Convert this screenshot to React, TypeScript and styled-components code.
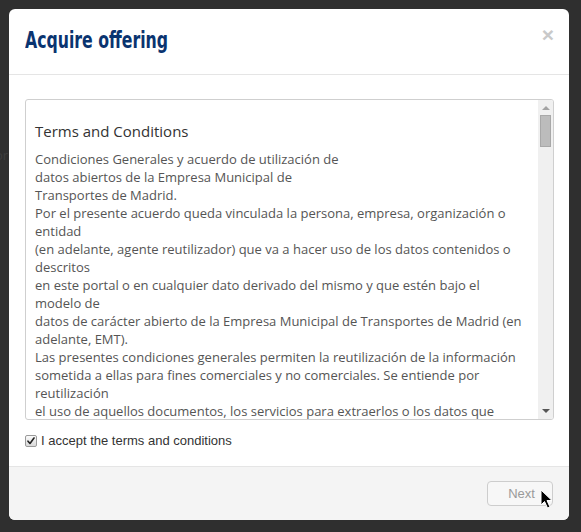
import React from "react";
import styled, { createGlobalStyle } from "styled-components";

const Global = createGlobalStyle`
  html, body { margin: 0; padding: 0; background: #2f2f2f; }
  body { width: 581px; height: 532px; overflow: hidden; font-family: "Liberation Sans", Arial, sans-serif; }
  #root { position: relative; }
`;

const Page = styled.div`
  position: relative;
  height: 532px;
  padding: 9px 0 0 9px;
  box-sizing: border-box;
`;

const BehindText = styled.span`
  position: absolute;
  left: -5px;
  top: 146px;
  font-family: "Open Sans", sans-serif;
  font-size: 13px;
  color: #3e3e3e;
`;

const Modal = styled.div`
  width: 560px;
  height: 511px;
  background: #fff;
  border-radius: 6px;
  display: flex;
  flex-direction: column;
  overflow: hidden;
`;

const Header = styled.div`
  height: 66px;
  box-sizing: border-box;
  border-bottom: 1px solid #e5e5e5;
  display: flex;
  justify-content: space-between;
  align-items: flex-start;
  padding: 0 15px 0 16px;
`;

const Title = styled.h3`
  margin: 0;
  padding-top: 17px;
  font-family: "DejaVu Sans Condensed", "DejaVu Sans", sans-serif;
  font-weight: 700;
  font-size: 23px;
  line-height: 28px;
  color: #0a3470;
  transform: scaleX(0.76);
  transform-origin: left center;
  white-space: nowrap;
`;

const Close = styled.span`
  margin-top: 15px;
  font-family: "Liberation Sans", Arial, sans-serif;
  font-weight: 700;
  font-size: 21px;
  line-height: 21px;
  color: #c9c9c9;
`;

const Body = styled.div`
  flex: 1;
  padding: 24px 15px 0 16px;
  display: flex;
  flex-direction: column;
`;

const TermsBox = styled.div`
  height: 321px;
  box-sizing: border-box;
  border: 1px solid #cfcfcf;
  border-radius: 3px;
  display: flex;
  overflow: hidden;
`;

const TermsContent = styled.div`
  flex: 1;
  overflow: hidden;
  padding: 21px 9px 0 9px;
  font-family: "Open Sans", sans-serif;
`;

const TermsHeading = styled.h4`
  margin: 0 0 9px 0;
  font-size: 15px;
  line-height: 20px;
  font-weight: 400;
  color: #333;
`;

const TermsText = styled.div`
  font-size: 13px;
  line-height: 18px;
  color: #555;
  white-space: pre-line;
`;

const ScrollTrack = styled.div`
  width: 15px;
  background: #f0f0f0;
  display: flex;
  flex-direction: column;
  align-items: center;
`;

const Arrow = styled.div<{ $down?: boolean }>`
  width: 0;
  height: 0;
  border-left: 4px solid transparent;
  border-right: 4px solid transparent;
  ${(p) => (p.$down ? "border-top: 4px solid #555;" : "border-bottom: 4px solid #a3a3a3;")}
  margin: ${(p) => (p.$down ? "auto 0 6px 0" : "6px 0 0 0")};
`;

const Thumb = styled.div`
  margin-top: 5px;
  width: 9px;
  height: 30px;
  background: #bcbcbc;
  border: 1px solid #a8a8a8;
`;

const AcceptRow = styled.label`
  display: flex;
  align-items: center;
  gap: 4px;
  margin-top: 13px;
  font-family: "Liberation Sans", Arial, sans-serif;
  font-size: 13px;
  line-height: 15px;
  color: #333;
`;

const CheckBox = styled.span`
  width: 10px;
  height: 10px;
  flex: none;
  border: 1px solid #9a9a9a;
  border-radius: 2px;
  background: linear-gradient(#fbfbfb, #d8d8d8);
  display: flex;
  align-items: center;
  justify-content: center;
`;

const Footer = styled.div`
  height: 54px;
  box-sizing: border-box;
  border-top: 1px solid #e5e5e5;
  background: #f4f4f4;
  display: flex;
  justify-content: flex-end;
  align-items: flex-start;
  padding: 14px 16px 0 0;
`;

const ButtonWrap = styled.div`
  position: relative;
`;

const NextButton = styled.button`
  width: 66px;
  height: 25px;
  box-sizing: border-box;
  border: 1px solid #cdcdcd;
  border-radius: 4px;
  background: #f7f7f7;
  font-family: "Liberation Sans", Arial, sans-serif;
  font-size: 13px;
  color: #9a9a9a;
  padding: 0 0 0 3px;
  text-align: center;
`;

const Cursor = styled.svg`
  position: absolute;
  left: 53px;
  top: 8px;
`;

const text = `Condiciones Generales y acuerdo de utilización de
datos abiertos de la Empresa Municipal de
Transportes de Madrid.
Por el presente acuerdo queda vinculada la persona, empresa, organización o entidad
(en adelante, agente reutilizador) que va a hacer uso de los datos contenidos o descritos
en este portal o en cualquier dato derivado del mismo y que estén bajo el modelo de
datos de carácter abierto de la Empresa Municipal de Transportes de Madrid (en adelante, EMT).
Las presentes condiciones generales permiten la reutilización de la información sometida a ellas para fines comerciales y no comerciales. Se entiende por reutilización
el uso de aquellos documentos, los servicios para extraerlos o los datos que`;

export default function App() {
  return (
    <Page>
      <Global />
      <BehindText>or</BehindText>
      <Modal>
        <Header>
          <Title>Acquire offering</Title>
          <Close>×</Close>
        </Header>
        <Body>
          <TermsBox>
            <TermsContent>
              <TermsHeading>Terms and Conditions</TermsHeading>
              <TermsText>{text}</TermsText>
            </TermsContent>
            <ScrollTrack>
              <Arrow />
              <Thumb />
              <Arrow $down />
            </ScrollTrack>
          </TermsBox>
          <AcceptRow>
            <CheckBox>
              <svg width="8" height="8" viewBox="0 0 8 8">
                <path d="M1 4.2 L3 6.5 L7 1" fill="none" stroke="#222" strokeWidth="1.6" strokeLinecap="round" strokeLinejoin="round" />
              </svg>
            </CheckBox>
            I accept the terms and conditions
          </AcceptRow>
        </Body>
        <Footer>
          <ButtonWrap>
            <NextButton disabled>Next</NextButton>
            <Cursor width="14" height="21" viewBox="0 0 14 21">
              <path d="M1 1 L1 16 L4.5 12.5 L7.5 19 L10 18 L7 11.5 L12 11.5 Z" fill="#000" stroke="#fff" strokeWidth="1" strokeLinejoin="round" />
            </Cursor>
          </ButtonWrap>
        </Footer>
      </Modal>
    </Page>
  );
}
